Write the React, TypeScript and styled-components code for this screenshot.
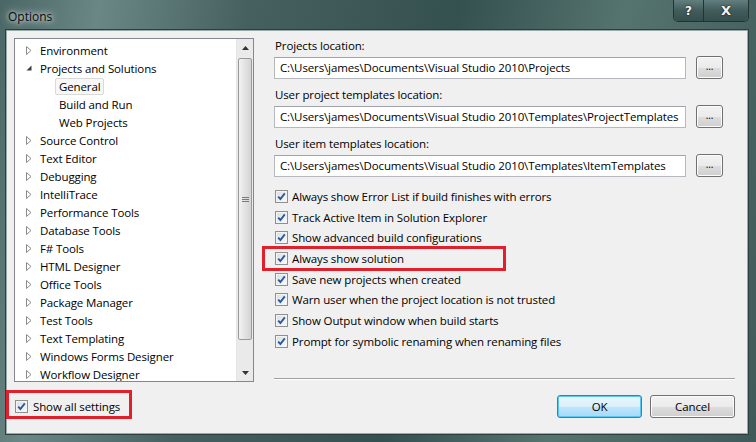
import React from 'react';
import styled, { createGlobalStyle } from 'styled-components';

const GlobalStyle = createGlobalStyle`
  html, body {
    margin: 0;
    padding: 0;
    background: #2e4446;
  }
  body {
    font-family: 'Open Sans', 'Noto Sans', 'Liberation Sans', sans-serif;
    font-size: 11.5px;
    letter-spacing: -0.12px;
    color: #000;
  }
`;

interface TreeItemModel {
  label: string;
  level: number;
  expanded?: boolean;
  leaf?: boolean;
  selected?: boolean;
}

const treeItems: TreeItemModel[] = [
  { label: 'Environment', level: 0 },
  { label: 'Projects and Solutions', level: 0, expanded: true },
  { label: 'General', level: 1, leaf: true, selected: true },
  { label: 'Build and Run', level: 1, leaf: true },
  { label: 'Web Projects', level: 1, leaf: true },
  { label: 'Source Control', level: 0 },
  { label: 'Text Editor', level: 0 },
  { label: 'Debugging', level: 0 },
  { label: 'IntelliTrace', level: 0 },
  { label: 'Performance Tools', level: 0 },
  { label: 'Database Tools', level: 0 },
  { label: 'F# Tools', level: 0 },
  { label: 'HTML Designer', level: 0 },
  { label: 'Office Tools', level: 0 },
  { label: 'Package Manager', level: 0 },
  { label: 'Test Tools', level: 0 },
  { label: 'Text Templating', level: 0 },
  { label: 'Windows Forms Designer', level: 0 },
  { label: 'Workflow Designer', level: 0 },
];

const locations = [
  { label: 'Projects location:', value: 'C:\\Users\\james\\Documents\\Visual Studio 2010\\Projects' },
  {
    label: 'User project templates location:',
    value: 'C:\\Users\\james\\Documents\\Visual Studio 2010\\Templates\\ProjectTemplates',
  },
  {
    label: 'User item templates location:',
    value: 'C:\\Users\\james\\Documents\\Visual Studio 2010\\Templates\\ItemTemplates',
  },
];

const options = [
  { label: 'Always show Error List if build finishes with errors' },
  { label: 'Track Active Item in Solution Explorer' },
  { label: 'Show advanced build configurations' },
  { label: 'Always show solution', highlighted: true },
  { label: 'Save new projects when created' },
  { label: 'Warn user when the project location is not trusted' },
  { label: 'Show Output window when build starts' },
  { label: 'Prompt for symbolic renaming when renaming files' },
];

const CheckBox: React.FC = () => (
  <CheckFrame>
    <svg width="9" height="9" viewBox="0 0 9 9">
      <path d="M1.2 4.6 L3.4 7 L7.8 1.4" fill="none" stroke="#2a5a9e" strokeWidth="1.9" />
    </svg>
  </CheckFrame>
);

const Arrow: React.FC<{ expanded?: boolean }> = ({ expanded }) =>
  expanded ? (
    <svg width="6" height="6" viewBox="0 0 6 6">
      <path d="M0.5 5.5 L5.5 5.5 L5.5 0.5 Z" fill="#3c3c3c" />
    </svg>
  ) : (
    <svg width="6" height="9" viewBox="0 0 6 9">
      <path d="M0.5 0.5 L5 4.5 L0.5 8.5 Z" fill="none" stroke="#8a8a8a" strokeWidth="1" />
    </svg>
  );

const App: React.FC = () => {
  return (
    <>
      <GlobalStyle />
      <Window>
        <TitleBar>
          <Title>Options</Title>
          <CaptionButtons>
            <CaptionButton wide={false}>?</CaptionButton>
            <CaptionButton wide>X</CaptionButton>
          </CaptionButtons>
        </TitleBar>
        <Client>
          <Tree>
            <TreeList>
              {treeItems.map((item) => (
                <TreeRow key={item.label} level={item.level}>
                  <Expander>{!item.leaf && <Arrow expanded={item.expanded} />}</Expander>
                  <TreeLabel selected={item.selected}>{item.label}</TreeLabel>
                </TreeRow>
              ))}
            </TreeList>
            <ScrollBar>
              <ScrollArrow>
                <svg width="7" height="4" viewBox="0 0 7 4">
                  <path d="M0 4 L3.5 0 L7 4 Z" fill="#333" />
                </svg>
              </ScrollArrow>
              <ScrollTrack>
                <Thumb>
                  <svg width="7" height="7" viewBox="0 0 7 7">
                    <path d="M0 1.5 H7 M0 3.5 H7 M0 5.5 H7" stroke="#7a7a7a" strokeWidth="1" />
                  </svg>
                </Thumb>
              </ScrollTrack>
              <ScrollArrow>
                <svg width="7" height="4" viewBox="0 0 7 4">
                  <path d="M0 0 L3.5 4 L7 0 Z" fill="#333" />
                </svg>
              </ScrollArrow>
            </ScrollBar>
          </Tree>

          <Settings>
            {locations.map((loc) => (
              <Field key={loc.label}>
                <FieldLabel>{loc.label}</FieldLabel>
                <FieldRow>
                  <TextBox>{loc.value}</TextBox>
                  <BrowseButton>...</BrowseButton>
                </FieldRow>
              </Field>
            ))}
            <OptionList>
              {options.map((opt) => (
                <OptionRow key={opt.label}>
                  <CheckBox />
                  <span>{opt.label}</span>
                  {opt.highlighted && <Highlight />}
                </OptionRow>
              ))}
            </OptionList>
            <Separator />
          </Settings>

          <ShowAll>
            <CheckBox />
            <span>Show all settings</span>
            <ShowAllHighlight />
          </ShowAll>

          <Buttons>
            <DialogButton primary>OK</DialogButton>
            <DialogButton primary={false}>Cancel</DialogButton>
          </Buttons>
        </Client>
      </Window>
    </>
  );
};

const Window = styled.div`
  width: 756px;
  height: 442px;
  box-sizing: border-box;
  display: flex;
  flex-direction: column;
  padding: 0 8px 8px 6px;
  background: linear-gradient(100deg, #4a6766 0%, #6a8786 12%, #45605f 30%, #34504f 55%, #55736f 75%, #3f5a59 100%);
  overflow: hidden;
`;

const TitleBar = styled.div`
  height: 30px;
  display: flex;
  align-items: flex-start;
  justify-content: space-between;
  flex-shrink: 0;
`;

const Title = styled.div`
  padding: 8px 0 0 2px;
  font-size: 12px;
  letter-spacing: 0;
  color: #0a0a0a;
  text-shadow: 0 0 8px rgba(255, 255, 255, 0.9), 0 0 4px rgba(255, 255, 255, 0.8);
`;

const CaptionButtons = styled.div`
  display: flex;
  margin-right: -1px;
  border: 1px solid #203433;
  border-top: none;
  border-radius: 0 0 5px 5px;
  overflow: hidden;
  box-shadow: inset 0 0 0 1px rgba(255, 255, 255, 0.3);
`;

const CaptionButton = styled.div<{ wide: boolean }>`
  width: ${(p) => (p.wide ? 44 : 29)}px;
  height: 21px;
  display: flex;
  align-items: center;
  justify-content: center;
  font-family: 'DejaVu Sans', sans-serif;
  font-weight: bold;
  font-size: ${(p) => (p.wide ? 13 : 12)}px;
  color: #f4f4f4;
  text-shadow: 0 0 2px #000;
  background: linear-gradient(#637e7e, #425c5c 50%, #354e4e);
  & + & {
    border-left: 1px solid #203433;
  }
`;

const Client = styled.div`
  flex: 1;
  display: grid;
  grid-template-columns: 240px 1fr;
  grid-template-rows: 344px 1fr;
  column-gap: 20px;
  padding: 7px 12px 0 7px;
  background: #f0f0f0;
  border: 1px solid #9aa9a9;
  box-shadow: 0 0 0 1px #2c3f3f;
`;

const Tree = styled.div`
  display: flex;
  background: #fff;
  border: 1px solid #828790;
  overflow: hidden;
`;

const TreeList = styled.div`
  flex: 1;
  padding-top: 2px;
`;

const TreeRow = styled.div<{ level: number }>`
  height: 18px;
  display: flex;
  align-items: center;
  padding-left: ${(p) => 11 + p.level * 19}px;
  white-space: nowrap;
`;

const Expander = styled.span`
  width: 14px;
  display: flex;
  align-items: center;
  justify-content: flex-start;
`;

const TreeLabel = styled.span<{ selected?: boolean }>`
  margin-left: ${(p) => (p.selected ? -4 : 0)}px;
  padding: 0 ${(p) => (p.selected ? 3 : 0)}px;
  line-height: 15px;
  border: ${(p) => (p.selected ? '1px solid #d9d9d9' : 'none')};
  border-radius: 2px;
  background: ${(p) => (p.selected ? '#f7f7f7' : 'transparent')};
`;

const ScrollBar = styled.div`
  width: 16px;
  display: flex;
  flex-direction: column;
  background: #eaeaea;
  border-left: 1px solid #e4e4e4;
`;

const ScrollArrow = styled.div`
  height: 17px;
  display: flex;
  align-items: center;
  justify-content: center;
`;

const ScrollTrack = styled.div`
  flex: 1;
  padding: 2px 0 24px;
  display: flex;
`;

const Thumb = styled.div`
  flex: 1;
  margin: 0 1px;
  display: flex;
  align-items: center;
  justify-content: center;
  border: 1px solid #9a9a9a;
  border-radius: 2px;
  background: linear-gradient(90deg, #f2f2f2, #e2e2e2 50%, #d4d4d4);
`;

const Settings = styled.div`
  display: flex;
  flex-direction: column;
`;

const Field = styled.div`
  display: flex;
  flex-direction: column;
  margin-bottom: 8px;
`;

const FieldLabel = styled.div`
  line-height: 16px;
  margin-bottom: 2px;
  padding-left: 1px;
`;

const FieldRow = styled.div`
  display: flex;
  align-items: center;
  gap: 10px;
`;

const TextBox = styled.div`
  width: 412px;
  height: 22px;
  box-sizing: border-box;
  padding: 0 5px;
  display: flex;
  align-items: center;
  white-space: nowrap;
  overflow: hidden;
  background: #fff;
  border: 1px solid #b5b8bd;
  border-top-color: #a0a4aa;
`;

const BrowseButton = styled.div`
  width: 27px;
  height: 23px;
  box-sizing: border-box;
  display: flex;
  align-items: center;
  justify-content: center;
  padding-bottom: 3px;
  font-size: 10px;
  border: 1px solid #707070;
  border-radius: 3px;
  background: linear-gradient(#f2f2f2, #ebebeb 50%, #dddddd 51%, #cfcfcf);
  box-shadow: inset 0 0 0 1px #fcfcfc;
`;

const OptionList = styled.div`
  display: flex;
  flex-direction: column;
  margin-top: 1px;
`;

const OptionRow = styled.div`
  position: relative;
  height: 20.7px;
  display: flex;
  align-items: center;
  gap: 4px;
  padding-left: 1px;
  white-space: nowrap;
`;

const CheckFrame = styled.span`
  width: 13px;
  height: 13px;
  box-sizing: border-box;
  display: flex;
  align-items: center;
  justify-content: center;
  flex-shrink: 0;
  border: 1px solid #8f8f8f;
  background: linear-gradient(135deg, #dcdcdc, #fbfbfb);
  box-shadow: inset 0 0 0 1px #f4f4f4;
`;

const Highlight = styled.span`
  position: absolute;
  left: -12px;
  top: -2px;
  width: 244px;
  height: 25px;
  box-sizing: border-box;
  border: 3px solid #e0212b;
  pointer-events: none;
`;

const Separator = styled.div`
  margin-top: auto;
  margin-bottom: 2px;
  height: 1px;
  background: #a0a0a0;
  border-bottom: 1px solid #fff;
`;

const ShowAll = styled.div`
  position: relative;
  display: flex;
  align-items: center;
  align-self: start;
  gap: 5px;
  margin-top: 17px;
  padding-left: 1px;
  height: 14px;
`;

const ShowAllHighlight = styled.span`
  position: absolute;
  left: -8px;
  top: -9px;
  width: 126px;
  height: 29px;
  box-sizing: border-box;
  border: 3px solid #e0212b;
  pointer-events: none;
`;

const Buttons = styled.div`
  display: flex;
  justify-content: flex-end;
  align-items: flex-start;
  gap: 8px;
  padding-top: 13px;
`;

const DialogButton = styled.div<{ primary: boolean }>`
  width: 85px;
  height: 23px;
  box-sizing: border-box;
  display: flex;
  align-items: center;
  justify-content: center;
  border-radius: 3px;
  border: 1px solid ${(p) => (p.primary ? '#3c7fb1' : '#707070')};
  background: ${(p) =>
    p.primary
      ? 'linear-gradient(#eaf6fd, #d9f0fc 50%, #bee6fd 51%, #a7d9f5)'
      : 'linear-gradient(#f2f2f2, #ebebeb 50%, #dddddd 51%, #cfcfcf)'};
  box-shadow: ${(p) => (p.primary ? 'inset 0 0 0 1px #56c8f3' : 'inset 0 0 0 1px #fcfcfc')};
`;

export default App;
